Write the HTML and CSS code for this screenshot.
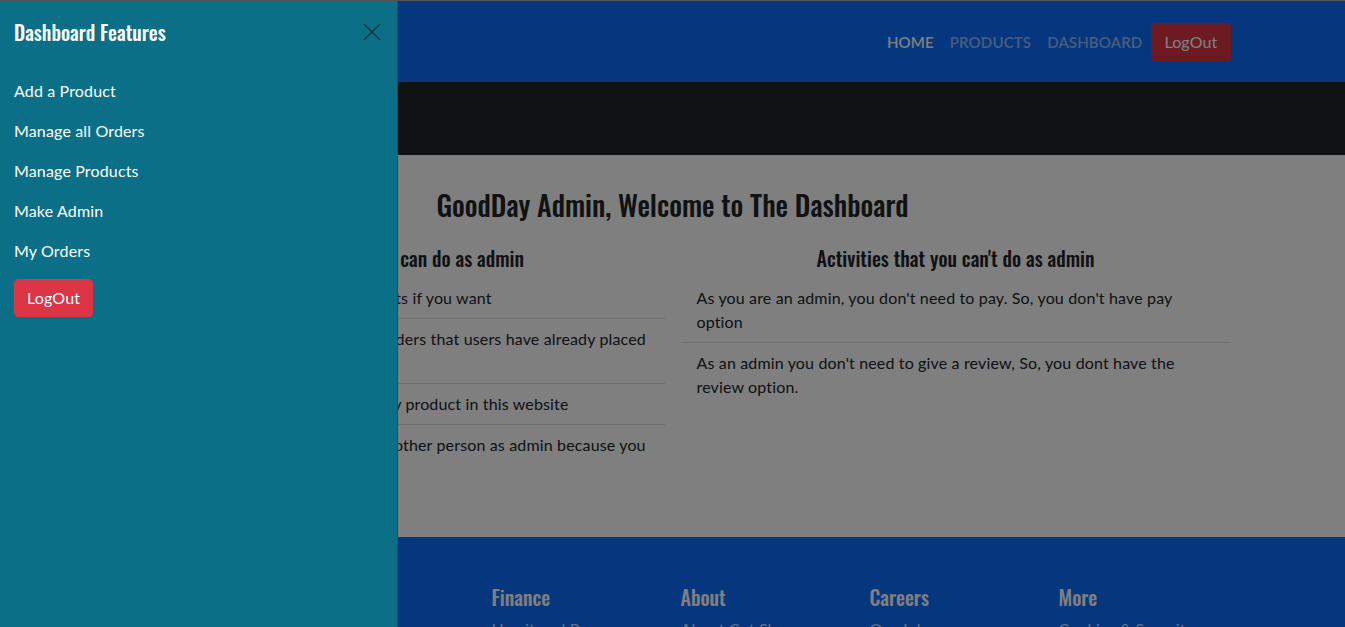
FILE: index.html
```html
<!DOCTYPE html>
<html lang="en">
<head>
<meta charset="utf-8">
<title>Dashboard</title>
<link rel="stylesheet" href="styles.css">
</head>
<body>
<header class="topnav">
  <div class="container topnav-inner">
    <nav class="nav-links">
      <a class="nav-link active" href="#">Home</a>
      <a class="nav-link" href="#">Products</a>
      <a class="nav-link" href="#">Dashboard</a>
      <button class="btn-logout" type="button">LogOut</button>
    </nav>
  </div>
</header>

<div class="subbar"></div>

<main class="dashboard">
  <div class="container">
    <h2 class="display title">GoodDay Admin, Welcome to The Dashboard</h2>
    <div class="columns">
      <section class="column">
        <h4 class="display col-title">Activities that you can do as admin</h4>
        <ul class="list">
          <li>You can add and remove your products if you want</li>
          <li>You can update and remove all the orders that users have already placed in this website</li>
          <li>You can manage, update or delete any product in this website</li>
          <li>You can add a new admin or make another person as admin because you are an admin</li>
        </ul>
      </section>
      <section class="column">
        <h4 class="display col-title">Activities that you can't do as admin</h4>
        <ul class="list">
          <li>As you are an admin, you don't need to pay. So, you don't have pay option</li>
          <li>As an admin you don't need to give a review, So, you dont have the review option.</li>
        </ul>
      </section>
    </div>
  </div>
</main>

<footer class="footer">
  <div class="container footer-grid">
    <div class="footer-col">
      <h5 class="display footer-title">Cut Shop</h5>
      <a class="footer-link" href="#">Our Story</a>
    </div>
    <div class="footer-col">
      <h5 class="display footer-title">Shop</h5>
      <a class="footer-link" href="#">Special Offers</a>
    </div>
    <div class="footer-col">
      <h5 class="display footer-title">Finance</h5>
      <a class="footer-link" href="#">Hamit and Pay</a>
    </div>
    <div class="footer-col">
      <h5 class="display footer-title">About</h5>
      <a class="footer-link" href="#">About Cut Shop</a>
    </div>
    <div class="footer-col">
      <h5 class="display footer-title">Careers</h5>
      <a class="footer-link" href="#">Our Jobs</a>
    </div>
    <div class="footer-col">
      <h5 class="display footer-title">More</h5>
      <a class="footer-link" href="#">Cookies &amp; Security</a>
    </div>
  </div>
</footer>

<div class="backdrop"></div>

<aside class="offcanvas">
  <div class="offcanvas-header">
    <h5 class="display offcanvas-title">Dashboard Features</h5>
    <button class="btn-close" type="button" aria-label="Close">
      <svg viewBox="0 0 18 18" width="18" height="18"><path d="M1 1 L17 17 M17 1 L1 17" stroke="#000" stroke-width="1.6" fill="none"/></svg>
    </button>
  </div>
  <div class="offcanvas-body">
    <a class="side-link" href="#">Add a Product</a>
    <a class="side-link" href="#">Manage all Orders</a>
    <a class="side-link" href="#">Manage Products</a>
    <a class="side-link" href="#">Make Admin</a>
    <a class="side-link" href="#">My Orders</a>
    <button class="btn-logout side-logout" type="button">LogOut</button>
  </div>
</aside>
</body>
</html>
```

FILE: styles.css
```css
* { box-sizing: border-box; }

html, body { height: 100%; }

body {
  margin: 0;
  border-top: 1px solid #aaaaaa;
  font-family: Lato, "Noto Sans", sans-serif;
  font-size: 16px;
  line-height: 1.5;
  letter-spacing: 0.15px;
  color: #212529;
  background: #fff;
}

h2, h4, h5 { margin: 0; }

.display {
  font-family: Oswald, "Liberation Sans Narrow", "DejaVu Sans Condensed", sans-serif;
  font-weight: 500;
  line-height: 1.2;
  letter-spacing: 0;
}

.container {
  width: 1116px;
  margin: 0 auto;
}

/* top navigation */
.topnav {
  background: #0d6efd;
  height: 81px;
}

.topnav-inner {
  height: 100%;
  display: flex;
  align-items: center;
  justify-content: flex-end;
}

.nav-links {
  display: flex;
  align-items: center;
  padding-top: 1px;
}

.nav-link {
  padding: 8px;
  color: rgba(255, 255, 255, 0.55);
  font-weight: 600;
  text-transform: uppercase;
  text-decoration: none;
  font-size: 15px;
}

.nav-link.active { color: #fff; }

.btn-logout {
  font-family: inherit;
  font-size: 16px;
  line-height: 24px;
  letter-spacing: 0.15px;
  color: #fff;
  background: #dc3545;
  border: 1px solid #dc3545;
  border-radius: 4px;
  padding: 6px 12px;
  margin-left: 1px;
  cursor: pointer;
}

/* dark sub bar */
.subbar {
  background: #212529;
  height: 73px;
}

/* dashboard content */
.dashboard {
  padding: 32.5px 0 48px;
}

.title {
  text-align: center;
  font-size: 28px;
  margin-bottom: 25px;
}

.columns {
  display: grid;
  grid-template-columns: 1fr 1fr;
  column-gap: 16px;
}

.col-title {
  text-align: center;
  font-size: 20px;
  margin-bottom: 8px;
}

.list {
  list-style: none;
  margin: 0;
  padding: 0;
}

.list li {
  padding: 8px 16px;
  border-bottom: 1px solid rgba(0, 0, 0, 0.125);
}

.list li:last-child { border-bottom: 0; }

/* footer */
.footer {
  background: #0d6efd;
  color: #fff;
  padding: 48px 0 40px;
}

.footer-grid {
  display: grid;
  grid-template-columns: repeat(5, 189px) 1fr;
  margin-left: calc(50% - 559px);
}

.footer-title {
  font-size: 20px;
  margin-bottom: 8px;
}

.footer-link {
  display: block;
  color: rgba(255, 255, 255, 0.8);
  text-decoration: none;
}

/* offcanvas overlay */
.backdrop {
  position: fixed;
  inset: 0;
  background: rgba(0, 0, 0, 0.5);
}

.offcanvas {
  position: fixed;
  top: 1px;
  left: 0;
  bottom: 0;
  width: 398px;
  background: #0a6f87;
  border-right: 1px solid rgba(0, 0, 0, 0.2);
  color: #fff;
  display: flex;
  flex-direction: column;
}

.offcanvas-header {
  display: flex;
  align-items: center;
  justify-content: space-between;
  padding: 14px 16px 16px 14px;
  height: 64px;
}

.offcanvas-title {
  font-size: 20px;
  line-height: 34px;
}

.btn-close {
  width: 18px;
  height: 18px;
  padding: 0;
  border: 0;
  background: transparent;
  opacity: 0.5;
  display: flex;
  cursor: pointer;
}

.offcanvas-body {
  padding: 6px 14px;
  display: flex;
  flex-direction: column;
  align-items: flex-start;
}

.side-link {
  padding: 8px 0;
  color: #fff;
  text-decoration: none;
}

.side-logout {
  margin: 8px 0 0;
}
```
